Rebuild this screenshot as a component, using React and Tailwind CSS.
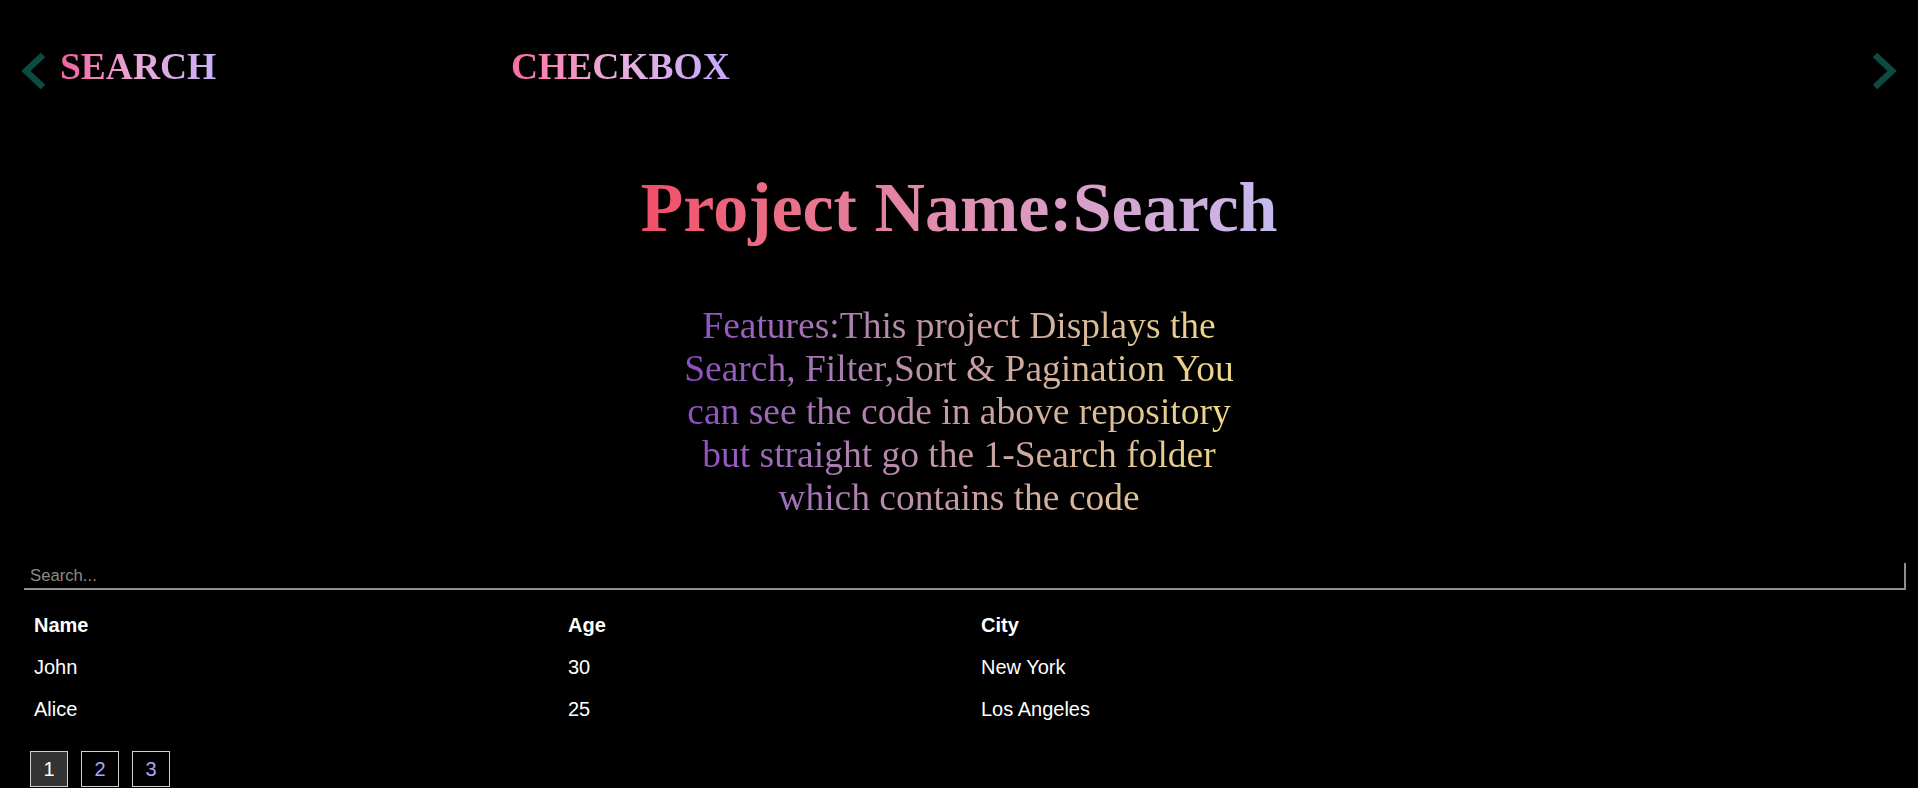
import { useState } from 'react';

const rows = [
  { name: 'John', age: 30, city: 'New York' },
  { name: 'Alice', age: 25, city: 'Los Angeles' },
];

function Chevron({ dir }) {
  // thin teal arrow used by the project slider
  const pts = dir === 'left' ? '21,3 4,19 21,35' : '3,3 20,19 3,35';
  return (
    <svg width="25" height="38" viewBox="0 0 25 38" className="block">
      <polyline points={pts} fill="none" stroke="#0d4a43" strokeWidth="6.5" strokeLinejoin="miter" />
    </svg>
  );
}

export default function App() {
  const [page, setPage] = useState(1);
  const [query, setQuery] = useState('');

  const shown = rows.filter((r) => r.name.toLowerCase().includes(query.toLowerCase()));

  return (
    <div className="min-h-screen bg-black text-white overflow-hidden">
      {/* Slider nav */}
      <div className="flex items-start h-[42px] mt-[46px]">
        <div className="ml-[22px] mt-[6px]">
          <Chevron dir="left" />
        </div>
        <div className="flex ml-[13px]">
          <span className="w-[451px] font-['Liberation_Serif',serif] font-bold text-[37.5px] leading-[42px]">
            <span className="bg-gradient-to-r from-[#f3609f] via-[#e8a8d8] to-[#c7b0f8] bg-clip-text text-transparent">SEARCH</span>
          </span>
          <span className="font-['Liberation_Serif',serif] font-bold text-[37.5px] leading-[42px]">
            <span className="bg-gradient-to-r from-[#ff6aa3] via-[#e6b0dc] to-[#c3a9fb] bg-clip-text text-transparent">CHECKBOX</span>
          </span>
        </div>
        <div className="ml-auto mr-[21px] mt-[6px]">
          <Chevron dir="right" />
        </div>
      </div>

      {/* Title */}
      <h1 className="mt-[80px] text-center font-['Liberation_Serif',serif] font-bold text-[70px] leading-[80px]">
        <span className="bg-gradient-to-r from-[#f04e66] via-[#e08fb2] to-[#c6baee] bg-clip-text text-transparent">
          Project Name:Search
        </span>
      </h1>

      {/* Features */}
      <p className="mx-auto mt-[56px] w-[585px] text-center font-['Liberation_Serif',serif] text-[37.5px] leading-[43px] bg-gradient-to-r from-[#8a44c6] via-[#c69ca2] to-[#f4de84] bg-clip-text text-transparent">
        Features:This project Displays the Search, Filter,Sort &amp; Pagination You can see the code in above repository but straight go the 1-Search folder which contains the code
      </p>

      {/* Search box */}
      <input
        value={query}
        onChange={(e) => setQuery(e.target.value)}
        placeholder="Search..."
        className="block mt-[44px] ml-[24px] w-[1882px] h-[27px] pl-[6px] bg-black border-b-2 border-r-2 border-[#8e8e8e] font-['Liberation_Sans',Arial,sans-serif] text-[16.7px] text-white placeholder:text-[#8a8a8a] outline-none"
      />

      {/* Table */}
      <table className="mt-[14px] ml-[24px] border-collapse font-['Liberation_Sans',Arial,sans-serif] text-[20px] leading-[23px]">
        <thead>
          <tr>
            <th className="w-[534px] h-[42px] px-[10px] text-left font-bold">Name</th>
            <th className="w-[413px] h-[42px] px-[10px] text-left font-bold">Age</th>
            <th className="w-[400px] h-[42px] px-[10px] text-left font-bold">City</th>
          </tr>
        </thead>
        <tbody>
          {shown.map((r) => (
            <tr key={r.name}>
              <td className="h-[42px] px-[10px]">{r.name}</td>
              <td className="h-[42px] px-[10px]">{r.age}</td>
              <td className="h-[42px] px-[10px]">{r.city}</td>
            </tr>
          ))}
        </tbody>
      </table>

      {/* Pagination */}
      <div className="flex gap-[13px] ml-[30px] mt-[21px] font-['Liberation_Sans',Arial,sans-serif] text-[20px]">
        {[1, 2, 3].map((n) => (
          <button
            key={n}
            onClick={() => setPage(n)}
            className={`w-[38px] h-[36px] border border-[#d0d0d0] ${
              page === n ? 'bg-[#333333] text-white' : 'bg-black text-[#a9a5ff]'
            }`}
          >
            {n}
          </button>
        ))}
      </div>
    </div>
  );
}
